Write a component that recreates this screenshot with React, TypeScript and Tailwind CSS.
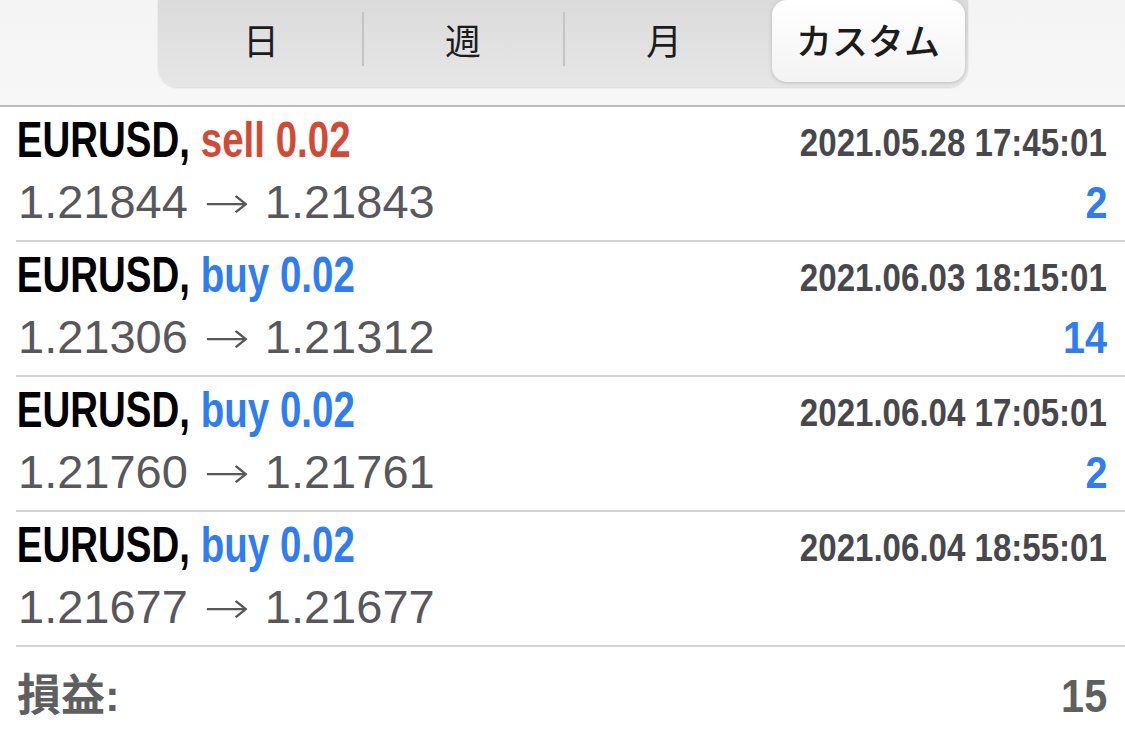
const sansB = "font-['Liberation_Sans',sans-serif] font-bold";
const cjk = "font-['Noto_Sans_CJK_JP',sans-serif]";

type Deal = {
    side: 'sell' | 'buy';
    time: string;
    open: string;
    close: string;
    points?: string;
};

const deals: Deal[] = [
    { side: 'sell', time: '2021.05.28 17:45:01', open: '1.21844', close: '1.21843', points: '2' },
    { side: 'buy', time: '2021.06.03 18:15:01', open: '1.21306', close: '1.21312', points: '14' },
    { side: 'buy', time: '2021.06.04 17:05:01', open: '1.21760', close: '1.21761', points: '2' },
    { side: 'buy', time: '2021.06.04 18:55:01', open: '1.21677', close: '1.21677' },
];

function Segments() {
    const tabs = ['日', '週', '月', 'カスタム'];
    return (
        <div className="-mt-4 flex h-[103px] w-[810px] items-end rounded-[20px] bg-gradient-to-b from-[#d9d9d9] to-[#e6e6e6] px-[3px] pb-[5px] shadow-[0_1px_2px_rgba(0,0,0,0.12)]">
            {tabs.map((t, i) => {
                const active = i === tabs.length - 1;
                return (
                    <div key={t} className="flex h-[82px] flex-1 items-center">
                        {i > 0 && !active && <div className="mb-[4px] h-[54px] w-[2px] bg-[#c4c4c4]" />}
                        <div
                            className={`flex h-full flex-1 items-center justify-center ${cjk} text-[36px] text-[#1c1c1c] ${
                                active
                                    ? 'ml-[8px] rounded-[15px] bg-gradient-to-b from-white to-[#f3f3f3] font-medium shadow-[0_1px_4px_rgba(0,0,0,0.18)]'
                                    : ''
                            }`}
                        >
                            <span className="pb-[5px] leading-none">{t}</span>
                        </div>
                    </div>
                );
            })}
        </div>
    );
}

function Row({ d }: { d: Deal }) {
    return (
        <div className="ml-4 flex h-[135px] flex-col border-b-2 border-[#d4d4d4] pr-[18px]">
            <div className="flex h-[70px] items-end justify-between pb-[12px]">
                <div className={`${sansB} origin-left scale-x-[0.77] whitespace-nowrap pl-px text-[50px] leading-none`}>
                    <span className="text-black">EURUSD, </span>
                    <span className={d.side === 'sell' ? 'text-[#d24a36]' : 'text-[#2f7df2]'}>
                        {d.side} 0.02
                    </span>
                </div>
                <div className={`${sansB} origin-right scale-x-[0.87] whitespace-nowrap pb-[3px] text-[38px] leading-none text-[#48484c]`}>
                    {d.time}
                </div>
            </div>
            <div className="-mt-[7px] flex h-[62px] items-center justify-between">
                <div className="flex items-baseline whitespace-nowrap pl-[2px] font-['Liberation_Sans',sans-serif] text-[47px] leading-none text-[#58585c]">
                    <span>{d.open}</span>
                    <span className="mx-[20px] inline-block scale-x-[1.25] font-['DejaVu_Sans',sans-serif] text-[44px] font-extralight">→</span>
                    <span>{d.close}</span>
                </div>
                {d.points && (
                    <div className={`${sansB} origin-right scale-x-[0.9] pt-[4px] text-[44px] leading-none text-[#2f7df2]`}>
                        {d.points}
                    </div>
                )}
            </div>
        </div>
    );
}

export default function App() {
    return (
        <div className="h-[734px] w-[1125px] overflow-hidden bg-white">
            <div className="flex h-[107px] justify-center overflow-hidden border-b-2 border-[#bcbcbc] bg-gradient-to-b from-[#f4f4f4] to-[#f7f7f7]">
                <Segments />
            </div>
            {deals.map((d) => (
                <Row key={d.time} d={d} />
            ))}
            <div className="flex h-[88px] items-center justify-between pl-[17px] pr-[18px] pt-[6px]">
                <div className="flex items-baseline leading-none text-[#5f5f5f]">
                    <span className={`${cjk} text-[44px] font-bold`}>損益</span>
                    <span className={`${sansB} text-[44px]`}>:</span>
                </div>
                <div className={`${sansB} origin-right scale-x-[0.9] pt-[4px] text-[46px] leading-none text-[#5f5f5f]`}>15</div>
            </div>
        </div>
    );
}
